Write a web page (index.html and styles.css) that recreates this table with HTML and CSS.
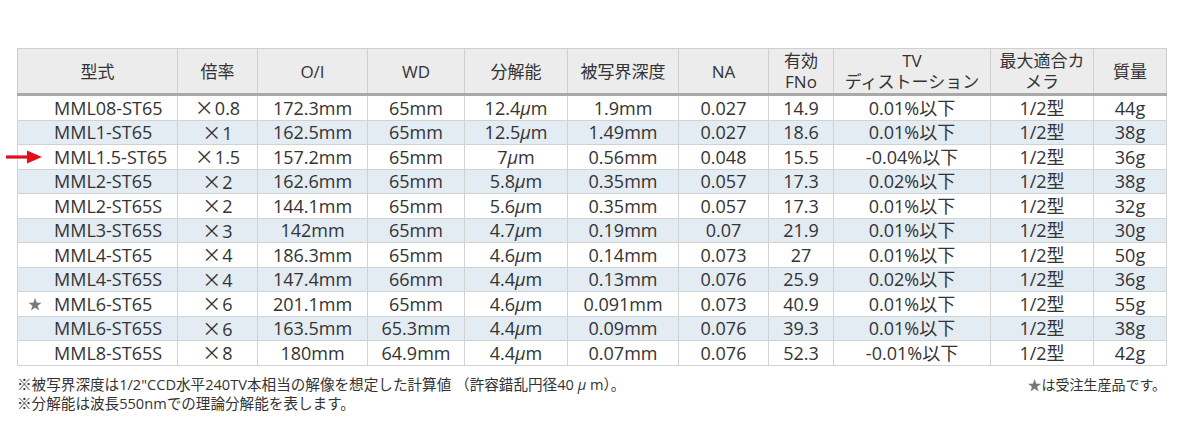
FILE: index.html
```html
<!DOCTYPE html>
<html lang="ja">
<head>
<meta charset="utf-8">
<link rel="stylesheet" href="styles.css">
</head>
<body>
<div class="wrap">
  <table class="spec">
    <colgroup>
      <col class="c1"><col class="c2"><col class="c3"><col class="c4"><col class="c5"><col class="c6"><col class="c7"><col class="c8"><col class="c9"><col class="c10"><col class="c11">
    </colgroup>
    <thead>
      <tr>
        <th>型式</th><th>倍率</th><th>O/I</th><th>WD</th><th>分解能</th><th>被写界深度</th><th>NA</th><th>有効<br>FNo</th><th>TV<br>ディストーション</th><th>最大適合カ<br>メラ</th><th>質量</th>
      </tr>
    </thead>
    <tbody>
      <tr><td class="model">MML08-ST65</td><td><span class="x">×</span>0.8</td><td>172.3mm</td><td>65mm</td><td>12.4<i>μ</i>m</td><td>1.9mm</td><td>0.027</td><td>14.9</td><td>0.01%以下</td><td>1/2型</td><td>44g</td></tr>
      <tr><td class="model">MML1-ST65</td><td><span class="x">×</span>1</td><td>162.5mm</td><td>65mm</td><td>12.5<i>μ</i>m</td><td>1.49mm</td><td>0.027</td><td>18.6</td><td>0.01%以下</td><td>1/2型</td><td>38g</td></tr>
      <tr><td class="model"><span class="arrow"><svg width="36" height="14" viewBox="0 0 36 14"><path d="M0 7H24" stroke="#e0101a" stroke-width="3.2"/><path d="M21 0.5L36 7L21 13.5Z" fill="#e0101a"/></svg></span>MML1.5-ST65</td><td><span class="x">×</span>1.5</td><td>157.2mm</td><td>65mm</td><td>7<i>μ</i>m</td><td>0.56mm</td><td>0.048</td><td>15.5</td><td>-0.04%以下</td><td>1/2型</td><td>36g</td></tr>
      <tr><td class="model">MML2-ST65</td><td><span class="x">×</span>2</td><td>162.6mm</td><td>65mm</td><td>5.8<i>μ</i>m</td><td>0.35mm</td><td>0.057</td><td>17.3</td><td>0.02%以下</td><td>1/2型</td><td>38g</td></tr>
      <tr><td class="model">MML2-ST65S</td><td><span class="x">×</span>2</td><td>144.1mm</td><td>65mm</td><td>5.6<i>μ</i>m</td><td>0.35mm</td><td>0.057</td><td>17.3</td><td>0.01%以下</td><td>1/2型</td><td>32g</td></tr>
      <tr><td class="model">MML3-ST65S</td><td><span class="x">×</span>3</td><td>142mm</td><td>65mm</td><td>4.7<i>μ</i>m</td><td>0.19mm</td><td>0.07</td><td>21.9</td><td>0.01%以下</td><td>1/2型</td><td>30g</td></tr>
      <tr><td class="model">MML4-ST65</td><td><span class="x">×</span>4</td><td>186.3mm</td><td>65mm</td><td>4.6<i>μ</i>m</td><td>0.14mm</td><td>0.073</td><td>27</td><td>0.01%以下</td><td>1/2型</td><td>50g</td></tr>
      <tr><td class="model">MML4-ST65S</td><td><span class="x">×</span>4</td><td>147.4mm</td><td>66mm</td><td>4.4<i>μ</i>m</td><td>0.13mm</td><td>0.076</td><td>25.9</td><td>0.02%以下</td><td>1/2型</td><td>36g</td></tr>
      <tr><td class="model"><span class="star">★</span>MML6-ST65</td><td><span class="x">×</span>6</td><td>201.1mm</td><td>65mm</td><td>4.6<i>μ</i>m</td><td>0.091mm</td><td>0.073</td><td>40.9</td><td>0.01%以下</td><td>1/2型</td><td>55g</td></tr>
      <tr><td class="model">MML6-ST65S</td><td><span class="x">×</span>6</td><td>163.5mm</td><td>65.3mm</td><td>4.4<i>μ</i>m</td><td>0.09mm</td><td>0.076</td><td>39.3</td><td>0.01%以下</td><td>1/2型</td><td>38g</td></tr>
      <tr><td class="model">MML8-ST65S</td><td><span class="x">×</span>8</td><td>180mm</td><td>64.9mm</td><td>4.4<i>μ</i>m</td><td>0.07mm</td><td>0.076</td><td>52.3</td><td>-0.01%以下</td><td>1/2型</td><td>42g</td></tr>
    </tbody>
  </table>
  <div class="notes">
    <div class="left">
      <p>※被写界深度は1/2"CCD水平240TV本相当の解像を想定した計算値 （許容錯乱円径40 <i>μ</i> m）。</p>
      <p>※分解能は波長550nmでの理論分解能を表します。</p>
    </div>
    <p class="right"><span class="star-n">★</span>は受注生産品です。</p>
  </div>
</div>
</body>
</html>
```

FILE: styles.css
```css
html, body {
  margin: 0;
  padding: 0;
  background: #fff;
}
body {
  font-family: "Open Sans", "Noto Sans CJK JP", sans-serif;
  color: #333;
}
.wrap {
  padding: 48px 0 0 17px;
  width: 1149px;
}
.spec {
  border-collapse: collapse;
  table-layout: fixed;
  width: 1149px;
  font-size: 18px;
}
.c1 { width: 160px; }
.c2 { width: 80px; }
.c3 { width: 110px; }
.c4 { width: 97px; }
.c5 { width: 103px; }
.c6 { width: 111px; }
.c7 { width: 90px; }
.c8 { width: 65px; }
.c9 { width: 157px; }
.c10 { width: 103px; }
.c11 { width: 73px; }
.spec th {
  background: #ececec;
  font-weight: normal;
  font-size: 17px;
  line-height: 21px;
  height: 44px;
  padding: 0;
  border: 1px solid #cfcfcf;
  border-bottom: 3px solid #a9a9a9;
  text-align: center;
  vertical-align: middle;
  white-space: nowrap;
}
.spec td {
  height: 23.5px;
  padding: 0;
  line-height: 22px;
  border: 1px solid #d2d2d2;
  text-align: center;
  vertical-align: middle;
  white-space: nowrap;
}
.spec tbody tr:nth-child(even) td {
  background: #e3ebf3;
}
.spec td.model {
  text-align: left;
  padding-left: 36px;
  position: relative;
}
.x {
  font-family: "Noto Sans CJK JP", sans-serif;
  font-size: 19px;
  margin-right: 1px;
}
.arrow {
  position: absolute;
  left: -12px;
  top: 50%;
  transform: translateY(-50%);
  display: flex;
}
.star {
  position: absolute;
  left: 10px;
  color: #777;
  font-size: 14px;
}
i {
  font-style: italic;
}
.notes {
  display: flex;
  justify-content: space-between;
  align-items: flex-start;
  font-family: "Open Sans", "Noto Sans CJK JP", sans-serif;
  font-size: 14.6px;
  line-height: 19px;
  margin-top: 9px;
}
.notes p {
  margin: 0;
}
.right {
  font-size: 14px;
}
.star-n {
  color: #777;
}
```
